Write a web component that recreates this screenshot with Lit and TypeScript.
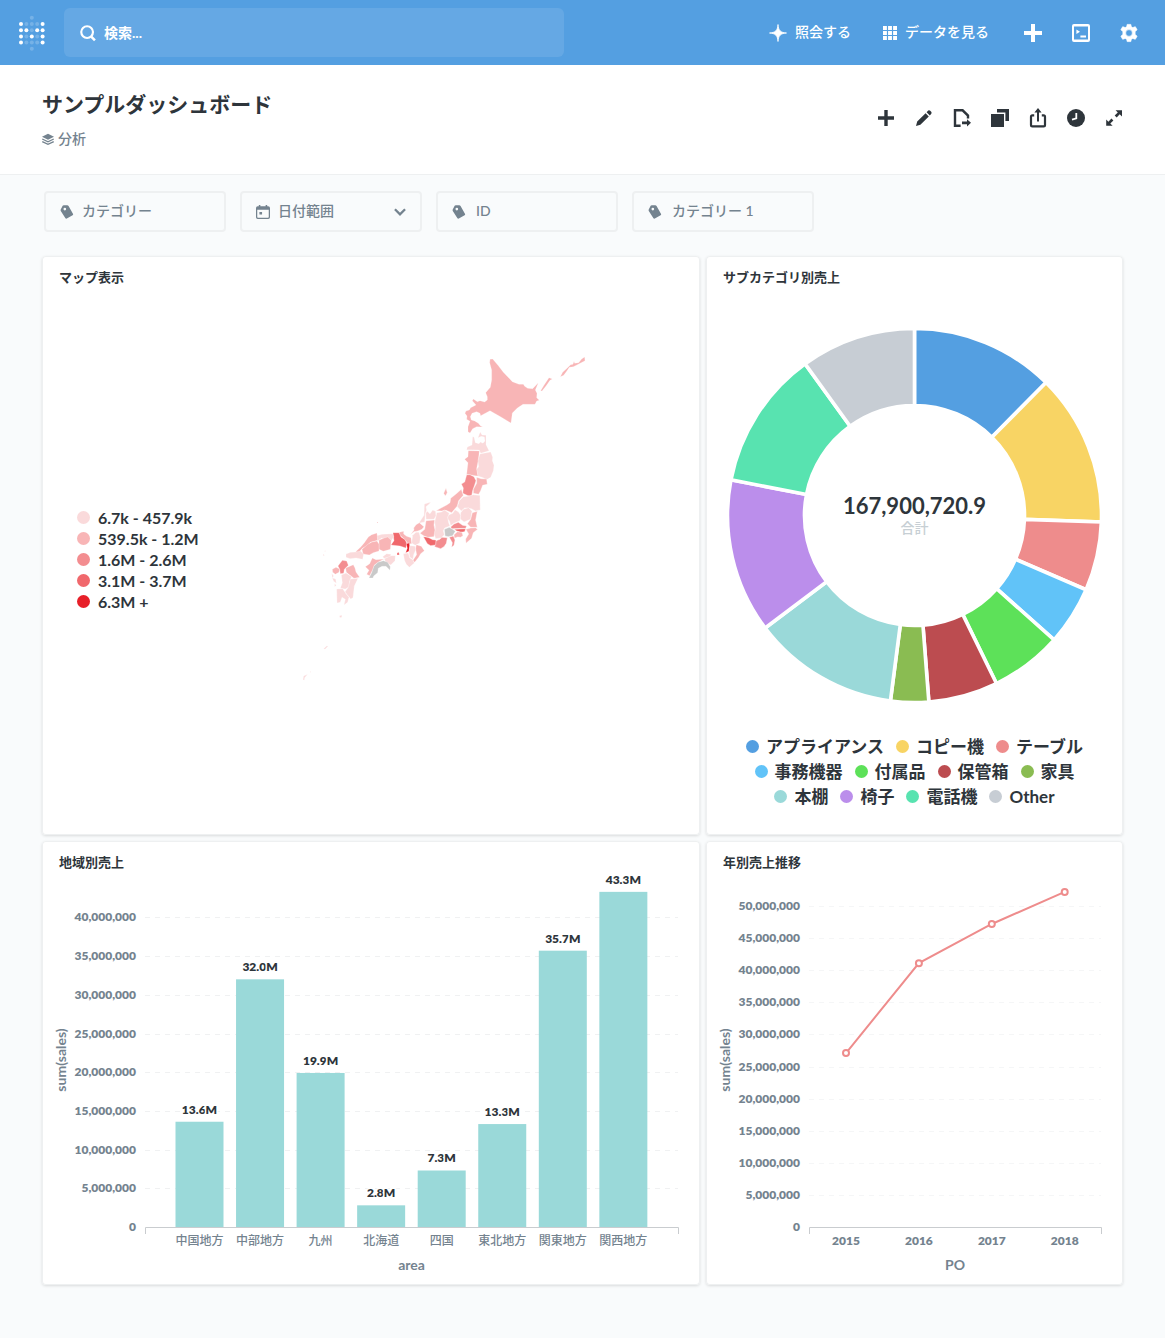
import { LitElement, html, svg, css, SVGTemplateResult } from "lit";
import { customElement, property } from "lit/decorators.js";

const baseType = css`
  :host {
    font-family: Lato, "Noto Sans CJK JP", sans-serif;
    color: #2e353b;
  }
  * {
    box-sizing: border-box;
  }
`;

/* ---------- Icons ---------- */

const ICONS: Record<string, SVGTemplateResult> = {
  search: svg`<circle cx="8" cy="8" r="6.6" fill="none" stroke="currentColor" stroke-width="2.4"/>
    <path d="M12.4 12.8 L16.8 17.4" stroke="currentColor" stroke-width="2.8"/>`,
  spark: svg`<path d="M9 0.5 C9.6 6.6 11.2 8.4 17.5 9 C11.2 9.6 9.6 11.4 9 17.5 C8.4 11.4 6.8 9.6 0.5 9 C6.8 8.4 8.4 6.6 9 0.5 Z" stroke="currentColor" stroke-width="0.8"/>`,
  grid: svg`<path d="M0 0h5v5H0z M6.5 0h5v5h-5z M13 0h5v5h-5z M0 6.5h5v5H0z M6.5 6.5h5v5h-5z M13 6.5h5v5h-5z M0 13h5v5H0z M6.5 13h5v5h-5z M13 13h5v5h-5z"/>`,
  plus: svg`<path d="M7 0h4v7h7v4h-7v7H7v-7H0V7h7z"/>`,
  add: svg`<path d="M7.3 1h3.4v6.3H17v3.4h-6.3V17H7.3v-6.3H1V7.3h6.3z"/>`,
  terminal: svg`<path fill-rule="evenodd" d="M2 0h14a2 2 0 0 1 2 2v14a2 2 0 0 1-2 2H2a2 2 0 0 1-2-2V2a2 2 0 0 1 2-2z M2 2.4v13.2h14V2.4z"/>
    <path d="M4.4 5.4 L8 7.7 L4.4 10z M8.4 11.6h5.6v1.8H8.4z"/>`,
  gear: svg`<path fill-rule="evenodd" stroke="currentColor" stroke-width="0.7" stroke-linejoin="round" d="M7.2 .4h3.6l.5 2.4 1.5.8 2.5-.9 1.8 3.1-2 1.7v3l2 1.7-1.8 3.1-2.5-.9-1.5.9-.5 2.3H7.2l-.5-2.3-1.5-.9-2.5.9L.9 12.2l2-1.7v-3l-2-1.7 1.8-3.1 2.5.9 1.5-.8z M9 5.6a3.4 3.4 0 1 0 0 6.8 3.4 3.4 0 0 0 0-6.8z"/>`,
  pencil: svg`<path d="M1 17 L2.2 12.6 L10.6 4.2 L13.8 7.4 L5.4 15.8 Z M11.6 3.2 L13.2 1.6 Q14.2 .8 15.2 1.8 L16.2 2.8 Q17 3.8 16.3 4.8 L14.8 6.4 Z"/>`,
  fileOut: svg`<path d="M7.6 16.7H2V1.3H9.6L15 6.6V9.4" fill="none" stroke="currentColor" stroke-width="2.4"/>
    <path d="M9 12.4h5V10.2l4 3.6-4 3.6v-2.2H9z"/>`,
  clone: svg`<path d="M0 5h13v13H0z M6 0h12v12h-3.6V3.6H6z"/>`,
  share: svg`<path d="M5.2 6.4H3.4Q2 6.4 2 7.8v8.1Q2 17.3 3.4 17.3h11.2q1.4 0 1.4-1.4V7.8q0-1.4-1.4-1.4h-1.8" fill="none" stroke="currentColor" stroke-width="2.2"/>
    <path d="M9 -1 L12.6 3.6H10V12.6H8V3.6H5.4z"/>`,
  clock: svg`<circle cx="9" cy="9" r="9"/><path d="M9.3 4v5.3L5 10.6" fill="none" stroke="#fff" stroke-width="1.8"/>`,
  expand: svg`<path d="M10.6 1.2H17V7.6L14.7 5.3L11.7 8.4L9.7 6.4L12.8 3.4z M1.2 10.4V16.8H7.6L5.3 14.6L8.4 11.6L6.4 9.6L3.4 12.7z"/>`,
  stack: svg`<path d="M9 1 L18 5.5 L9 10 L0 5.5z"/><path d="M.4 9 L9 13.2 L17.6 9 M.4 12.8 L9 17 L17.6 12.8" fill="none" stroke="currentColor" stroke-width="2"/>`,
  tag: svg`<path fill-rule="evenodd" d="M3.4 1 Q3.8 .2 4.8 .2 L9.4 .2 Q10.4 .3 11 1.2 L16.8 11.6 Q17.2 12.6 16.2 13.2 L8.8 17.4 Q7.6 17.9 7 17 L1 7.6 Q.6 6.8 .8 6z M6.2 3.6a1.7 1.7 0 1 0 0 3.4 1.7 1.7 0 0 0 0-3.4z"/>`,
  calendar: svg`<path fill-rule="evenodd" d="M3.6 0h2v1.6h6.8V0h2v1.6h1.2Q18 1.6 18 3.8V15.8Q18 18 15.8 18H2.2Q0 18 0 15.8V3.8Q0 1.6 2.2 1.6H3.6z M1.6 6v9.4Q1.6 16.4 2.6 16.4h12.8q1 0 1-1V6z M4.4 9h3.4v3.2H4.4z"/>`,
  chevron: svg`<path d="M2.5 5.5 L9 12 L15.5 5.5" fill="none" stroke="currentColor" stroke-width="3"/>`,
};

@customElement("ui-icon")
class UiIcon extends LitElement {
  @property() name = "";

  static styles = css`
    :host {
      display: inline-flex;
      width: 18px;
      height: 18px;
      flex: none;
    }
    svg {
      width: 100%;
      height: 100%;
      overflow: visible;
      fill: currentColor;
    }
  `;

  render() {
    return html`<svg viewBox="0 0 18 18" aria-hidden="true">${ICONS[this.name]}</svg>`;
  }
}

/* ---------- Top bar ---------- */

const LOGO_ROWS = ["..f..", "bfffb", "bbfbb", "bfbfb", "bfffb", "..f.."];

@customElement("top-bar")
class TopBar extends LitElement {
  static styles = [
    baseType,
    css`
      :host {
        display: block;
      }
      .bar {
        display: flex;
        align-items: center;
        height: 65px;
        padding: 0 27px 0 18px;
        background: #549fe1;
        color: #fff;
      }
      .logo {
        display: flex;
        width: 28px;
        margin-right: 18px;
      }
      .faint {
        opacity: 0.2;
      }
      .search {
        display: flex;
        align-items: center;
        gap: 8px;
        flex: 0 1 500px;
        height: 49px;
        padding: 0 16px;
        border-radius: 6px;
        background: rgba(255, 255, 255, 0.1);
      }
      .search ui-icon {
        width: 16px;
        height: 16px;
      }
      input {
        flex: 1;
        min-width: 0;
        border: 0;
        padding: 0;
        background: none;
        outline: none;
        font: 700 14px/20px Lato, "Noto Sans CJK JP", sans-serif;
        color: #fff;
      }
      input::placeholder {
        color: #fff;
        opacity: 1;
      }
      nav {
        display: flex;
        align-items: center;
        gap: 32px;
        margin-left: auto;
      }
      .link {
        display: flex;
        align-items: center;
        gap: 8px;
        color: #fff;
        text-decoration: none;
        font-size: 14px;
        font-weight: 500;
        line-height: 20px;
        white-space: nowrap;
      }
      .link span {
        padding-bottom: 2px;
      }
      .small {
        width: 14px;
        height: 14px;
      }
      button {
        display: flex;
        padding: 0;
        border: 0;
        background: none;
        color: inherit;
      }
      .tools {
        display: flex;
        gap: 30px;
        margin-left: 3px;
      }
    `,
  ];

  render() {
    return html`
      <header class="bar">
        <a class="logo" href="#" aria-label="ホーム">
          <svg width="28" height="36" viewBox="0 0 28 36" fill="#fff" aria-hidden="true">
            ${LOGO_ROWS.map((row, r) =>
              [...row].map((dot, c) =>
                dot === "."
                  ? null
                  : svg`<circle class=${dot === "f" ? "faint" : "lit"} cx=${3 + c * 5.4} cy=${2.8 + r * 6.2} r="2"/>`
              )
            )}
          </svg>
        </a>
        <label class="search">
          <ui-icon name="search"></ui-icon>
          <input type="text" placeholder="検索..." aria-label="検索" />
        </label>
        <nav>
          <a class="link" href="#"><ui-icon name="spark"></ui-icon><span>照会する</span></a>
          <a class="link" href="#"><ui-icon class="small" name="grid"></ui-icon><span>データを見る</span></a>
          <div class="tools">
            <button aria-label="作成"><ui-icon name="plus"></ui-icon></button>
            <button aria-label="SQL"><ui-icon name="terminal"></ui-icon></button>
            <button aria-label="設定"><ui-icon name="gear"></ui-icon></button>
          </div>
        </nav>
      </header>
    `;
  }
}

/* ---------- Card shell ---------- */

@customElement("dash-card")
class DashCard extends LitElement {
  @property() heading = "";

  static styles = [
    baseType,
    css`
      :host {
        display: block;
        min-width: 0;
        background: #fff;
        border-radius: 4px;
        box-shadow: inset 0 0 0 1px #eef0f1, 0 1px 3px rgba(0, 0, 0, 0.13);
      }
      h2 {
        height: 30px;
        margin: 0;
        padding: 11px 17px 0;
        font-size: 13px;
        line-height: 20px;
        font-weight: 700;
      }
    `,
  ];

  render() {
    return html`<h2>${this.heading}</h2><slot></slot>`;
  }
}

/* ---------- Map ---------- */

const SHADES = ["#fadadb", "#f8b5b6", "#f38d90", "#f0686c", "#e71f28"];
const MAP_LEGEND = ["6.7k - 457.9k", "539.5k - 1.2M", "1.6M - 2.6M", "3.1M - 3.7M", "6.3M +"];
const NO_DATA = "#c9c9c9";

type Region = [shade: number, outline: string];

const NORTH: Region[] = [
  [1, "M150 58L158 57L174 76L190 97L203 110L217 125L237 133L250 133L254 139L263 145L278 146L295 128L286 150L291 160L290 173L298 181L290 183L285 193L249 193L232 204L217 219L213 249L183 231L150 212L122 227L120 220L110 215L96 220L91 230L94 240L104 243L115 250L122 258L128 261L110 260L98 266L90 279L84 275L84 260L90 244L80 238L81 228L75 220L78 213L88 210L92 203L108 195L97 182L100 177L112 185L120 182L134 186L142 180L142 170L137 158L151 142L155 120L155 90L149 68z"],
  [1, "M302 152L312 136L327 113L337 117L330 121L318 138L306 153z"],
  [1, "M361 110L368 97L382 84L392 74L399 73L402 64L404 70L416 68L425 57L434 51L435 62L412 74L400 80L388 82L380 94L371 106z"],
  [0, "M98 290L102 291L106 308L117 311L121 306L129 310L135 303L133 291L124 289L114 293L118 283L121 276L126 285L138 286L138 314L147 332L122 340L118 330L80 329L82 321L96 315z"],
  [1, "M85 332L118 333L115 360L110 385L114 408L106 407L80 403L84 368L74 358L84 350z"],
  [0, "M120 342L152 336L158 352L157 362L162 376L160 392L152 412L138 420L130 413L114 408L110 388L116 380L114 362z"],
];

const CENTRAL: Region[] = [
  [2, "M200 134L210 134L222 140L228 152L224 165L218 182L215 198L204 197L188 190L190 174L184 162L194 156z"],
  [1, "M230 142L244 146L260 147L262 163L248 166L242 182L236 193L220 190L220 178L230 160z"],
  [0, "M190 200L208 198L220 194L236 196L240 196L241 240L226 243L214 236L194 234L184 243L172 230L178 212z"],
  [1, "M184 178L190 196L176 212L172 228L155 248L138 241L125 243L108 242L140 225L150 218L152 205L168 192z"],
  [1, "M138 174L142 188L136 198L131 190z"],
  [0, "M182 248L190 238L206 233L216 244L212 268L192 276L180 266z"],
  [1, "M217 248L232 244L227 270L232 292L212 292L202 281L212 268z"],
  [0, "M143 256L158 250L165 239L176 246L182 256L180 272L162 280L152 287L148 272L141 266z"],
  [2, "M152 291L162 282L175 277L188 286L200 288L197 295L155 296z"],
  [3, "M163 298L197 296L194 305L182 307L170 303z"],
  [1, "M198 298L212 294L226 293L233 298L220 308L215 325L198 340L197 327L206 312L202 305z"],
  [1, "M162 314L172 305L186 307L189 317L182 322L173 321L163 325z"],
  [2, "M148 322L160 318L165 330L162 346L155 352L157 338z"],
  [-1, "M133 298L148 292L158 298L166 304L158 317L145 320L135 318z"],
  [0, "M110 248L124 246L134 240L148 250L143 262L146 278L150 288L134 294L130 302L133 314L124 324L107 326L102 312L106 292L104 276z"],
  [2, "M108 332L120 328L126 322L142 323L139 340L132 350L122 356L104 350z"],
  [3, "M70 320L84 322L98 329L108 330L107 345L92 347L82 341z"],
  [1, "M78 272L104 270L102 285L105 300L102 320L84 322L72 318L60 310L74 298z"],
  [0, "M77 248L82 244L90 251L98 240L107 244L108 258L102 268L78 268z"],
  [0, "M73 222L93 216L88 222L78 230L80 240L76 252L74 276L56 280L72 256z"],
  [1, "M41 294L48 284L58 278L72 290L66 298L54 303L42 305L31 314L42 300z"],
];

const WEST: Region[] = [
  [0, "M368 76L378 67L387 67L391 82L389 99L376 106L365 99z"],
  [1, "M379 104L394 109L403 122L392 131L386 142L374 157L369 151L380 134L377 116z"],
  [1, "M330 76L328 67L341 64L341 72L350 79L363 83L365 101L354 101L346 90z"],
  [3, "M309 68L327 68L333 81L345 89L350 99L348 114L330 108L303 105L312 92z"],
  [4, "M349 101L358 99L359 108L357 124L347 128L352 115z"],
  [0, "M360 107L376 109L377 120L371 134L369 148L359 141L357 126z"],
  [0, "M340 131L355 129L359 143L369 150L373 159L358 172L349 163L344 152z"],
  [3, "M321 129L327 127L328 135L321 135z"],
  [0, "M261 77L276 73L308 71L311 80L305 91L290 85L274 85L264 93z"],
  [1, "M197 125L213 110L223 98L235 81L245 74L261 69L263 91L241 97L231 107L217 115L206 128z"],
  [1, "M267 91L280 85L293 81L304 91L301 118L280 124L267 118z"],
  [1, "M216 118L233 103L246 96L261 93L267 102L267 123L250 128L238 135L219 132z"],
  [0, "M168 132L182 127L198 126L211 123L221 132L218 148L198 144L180 146L168 142z"],
  [0, "M278 140L290 131L303 133L301 141L282 145z"],
  [0, "M283 146L304 137L316 137L315 152L302 165L287 157z"],
  [1, "M226 170L239 161L247 144L258 149L282 147L267 155L253 165L249 178L239 197L230 193L237 181z"],
  [-1, "M237 204L245 188L252 168L264 157L280 152L293 157L301 170L300 181L288 169L276 169L265 175L263 188L251 198L249 204z"],
  [2, "M144 168L157 151L170 153L175 166L163 178L161 190L151 191L149 178z"],
  [1, "M127 178L138 172L149 177L147 187L136 193L128 187z"],
  [1, "M167 174L190 164L195 174L198 186L209 202L192 205L182 197L169 187z"],
  [0, "M154 195L168 189L185 200L179 214L177 231L166 237L151 235L157 218z"],
  [0, "M181 207L204 205L193 228L189 263L182 267L165 246L175 232z"],
  [0, "M140 237L158 236L168 251L177 262L173 277L162 285L166 268L156 262L151 277L141 279z"],
  [0, "M125 190L131 198L127 204z M127 204L137 207L139 220L131 214z M134 221L139 226L134 230z"],
  [0, "M105 121L107 124L104 125z M99 132L104 136L99 137z M148 317L156 316L155 322L150 323z"],
  [0, "M101 416L111 407L114 409L105 418z M39 509L41 498L53 493L44 503L43 511z M60 487L63 483L63 487z"],
  [1, "M261 36h3v3h-3z"],
];

const drawRegions = (regions: Region[]) =>
  regions.map(([shade, d]) => svg`<path fill=${shade < 0 ? NO_DATA : SHADES[shade]} d=${d}/>`);

@customElement("japan-map")
class JapanMap extends LitElement {
  static styles = [
    baseType,
    css`
      :host {
        display: grid;
        grid-template-columns: 213px minmax(0, 1fr);
        padding: 0 10px 0 35px;
      }
      ul {
        list-style: none;
        margin: 0;
        padding: 221px 0 0;
        font-size: 16px;
        font-weight: 700;
        line-height: 21px;
      }
      li {
        display: flex;
        align-items: center;
        gap: 8px;
      }
      .dot {
        width: 13px;
        height: 13px;
      }
      .map {
        width: 100%;
        display: block;
      }
    `,
  ];

  render() {
    return html`
      <ul>
        ${MAP_LEGEND.map(
          (label, i) => html`<li>
            <svg class="dot" viewBox="0 0 13 13" aria-hidden="true"><circle cx="6.5" cy="6.5" r="6.5" fill=${SHADES[i]} /></svg>
            ${label}
          </li>`
        )}
      </ul>
      <svg class="map" viewBox="290 286 400 549" role="img" aria-label="マップ表示">
        <g stroke="#fff" stroke-linejoin="round">
          <g transform="translate(440 340) scale(0.3333)" stroke-width="0.6">${drawRegions(NORTH)}</g>
          <g transform="translate(400 430) scale(0.3333)" stroke-width="1.2">${drawRegions(CENTRAL)}</g>
          <g transform="translate(290 510) scale(0.3333)" stroke-width="0.8">${drawRegions(WEST)}</g>
        </g>
      </svg>
    `;
  }
}

/* ---------- Donut ---------- */

const SLICES: { label: string; color: string; end: number }[] = [
  { label: "アプライアンス", color: "#549fe1", end: 44.7 },
  { label: "コピー機", color: "#f8d464", end: 92 },
  { label: "テーブル", color: "#ee8c8c", end: 113.4 },
  { label: "事務機器", color: "#61c3f8", end: 131.7 },
  { label: "付属品", color: "#5de159", end: 154 },
  { label: "保管箱", color: "#bc4c50", end: 175.6 },
  { label: "家具", color: "#8abc52", end: 187.4 },
  { label: "本棚", color: "#9ad9d9", end: 233 },
  { label: "椅子", color: "#bb8eeb", end: 281 },
  { label: "電話機", color: "#58e3b0", end: 324.2 },
  { label: "Other", color: "#c7cdd4", end: 360 },
];

const polar = (radius: number, deg: number) => {
  const a = ((deg - 90) * Math.PI) / 180;
  return `${(radius * Math.cos(a)).toFixed(2)} ${(radius * Math.sin(a)).toFixed(2)}`;
};

const arcPath = (from: number, to: number, inner: number, outer: number) =>
  `M${polar(outer, from)}A${outer} ${outer} 0 0 1 ${polar(outer, to)}L${polar(inner, to)}A${inner} ${inner} 0 0 0 ${polar(inner, from)}z`;

@customElement("donut-chart")
class DonutChart extends LitElement {
  static styles = [
    baseType,
    css`
      :host {
        display: block;
      }
      .chart {
        display: block;
        width: 100%;
      }
      .total {
        font-size: 22px;
        font-weight: 700;
        fill: #2e353b;
      }
      .caption {
        font-size: 14px;
        font-weight: 500;
        fill: #c7cfd4;
      }
      ul {
        list-style: none;
        display: flex;
        flex-wrap: wrap;
        justify-content: center;
        column-gap: 12px;
        margin: 0;
        padding: 0 24px 24px;
        font-size: 17px;
        font-weight: 700;
        line-height: 25px;
      }
      li {
        display: flex;
        align-items: center;
        gap: 7px;
      }
      .dot {
        width: 13px;
        height: 13px;
      }
    `,
  ];

  render() {
    return html`
      <svg class="chart" viewBox="0 0 417 448" role="img" aria-label="サブカテゴリ別売上">
        <g transform="translate(208.5 229.5)">
          ${SLICES.map(
            (s, i) =>
              svg`<path fill=${s.color} stroke="#fff" stroke-width="3.6" d=${arcPath(i ? SLICES[i - 1].end : 0, s.end, 110, 187)}/>`
          )}
          <text class="total" text-anchor="middle" y="-2">167,900,720.9</text>
          <text class="caption" text-anchor="middle" y="17">合計</text>
        </g>
      </svg>
      <ul>
        ${SLICES.map(
          (s) => html`<li>
            <svg class="dot" viewBox="0 0 13 13" aria-hidden="true"><circle cx="6.5" cy="6.5" r="6.5" fill=${s.color} /></svg>
            ${s.label}
          </li>`
        )}
      </ul>
    `;
  }
}

/* ---------- Cartesian charts ---------- */

const PLOT_LEFT = 103;
const BASELINE = 356;
const CHART_HEIGHT = 414;

const chartType = css`
  :host {
    display: block;
  }
  svg {
    display: block;
    width: 100%;
  }
  .tick {
    font-size: 12px;
    font-weight: 800;
    fill: #74838f;
  }
  .name {
    font-weight: 500;
  }
  .axis-title {
    font-size: 14px;
    font-weight: 700;
    fill: #74838f;
  }
  .value {
    font-size: 12px;
    font-weight: 800;
    fill: #2e353b;
    stroke: #fff;
    stroke-width: 3;
    paint-order: stroke;
  }
  .gridline {
    stroke: #f0f1f2;
    stroke-dasharray: 5 5;
  }
  .axis {
    fill: none;
    stroke: #c9cccf;
  }
  .bar {
    fill: #9ad9d9;
  }
  .series {
    fill: none;
    stroke: #ee8c8c;
    stroke-width: 2;
  }
  .point {
    fill: #fff;
    stroke: #ee8c8c;
    stroke-width: 2;
  }
`;

const frame = (right: number, maxTick: number, perMillion: number, xTitle: string) => {
  const ticks = Array.from({ length: maxTick / 5 + 1 }, (_, i) => i * 5);
  return svg`
    ${ticks.map((t) => {
      const y = Math.round(BASELINE - t * perMillion);
      return svg`
        ${t ? svg`<line class="gridline" x1=${PLOT_LEFT} x2=${right} y1=${y + 0.5} y2=${y + 0.5}/>` : null}
        <text class="tick" text-anchor="end" x="94" y=${y + 4}>${(t * 1e6).toLocaleString("en-US")}</text>`;
    })}
    <text class="axis-title" text-anchor="middle" transform="translate(24 189) rotate(-90)">sum(sales)</text>
    <text class="axis-title" text-anchor="middle" x=${(PLOT_LEFT + right) / 2} y="399">${xTitle}</text>`;
};

const axisLine = (right: number) =>
  svg`<path class="axis" d=${`M${PLOT_LEFT + 0.5} ${BASELINE + 7}V${BASELINE + 0.5}H${right + 0.5}V${BASELINE + 7}`}/>`;

const AREAS: [string, number][] = [
  ["中国地方", 13.6],
  ["中部地方", 32.0],
  ["九州", 19.9],
  ["北海道", 2.8],
  ["四国", 7.3],
  ["東北地方", 13.3],
  ["関東地方", 35.7],
  ["関西地方", 43.3],
];

@customElement("area-bars")
class AreaBars extends LitElement {
  static styles = [baseType, chartType];

  render() {
    const perMillion = 7.74;
    return html`
      <svg viewBox="0 0 658 ${CHART_HEIGHT}" role="img" aria-label="地域別売上">
        ${frame(636, 40, perMillion, "area")}
        ${AREAS.map(([name, sales], i) => {
          const center = 157.5 + i * 60.55;
          const height = sales * perMillion;
          const top = BASELINE - height;
          return svg`
            <rect class="bar" x=${center - 24} y=${top} width="48" height=${height}/>
            <text class="value" text-anchor="middle" x=${center} y=${top - 8}>${sales.toFixed(1)}M</text>
            <text class="tick name" text-anchor="middle" x=${center} y="374">${name}</text>`;
        })}
        ${axisLine(636)}
      </svg>
    `;
  }
}

const YEARS: [string, number][] = [
  ["2015", 27.1],
  ["2016", 41.1],
  ["2017", 47.2],
  ["2018", 52.2],
];

@customElement("year-line")
class YearLine extends LitElement {
  static styles = [
    baseType,
    chartType,
    css`
      .gridline {
        stroke: #f5f6f7;
      }
    `,
  ];

  render() {
    const perMillion = 6.42;
    const points = YEARS.map(([year, sales], i) => ({
      year,
      x: 140 + i * 72.9,
      y: BASELINE - sales * perMillion,
    }));
    return html`
      <svg viewBox="0 0 417 ${CHART_HEIGHT}" role="img" aria-label="年別売上推移">
        ${frame(395, 50, perMillion, "PO")} ${axisLine(395)}
        <polyline class="series" points=${points.map((p) => `${p.x},${p.y}`).join(" ")} />
        ${points.map(
          (p) => svg`
            <circle class="point" cx=${p.x} cy=${p.y} r="3"/>
            <text class="tick" text-anchor="middle" x=${p.x} y="374">${p.year}</text>`
        )}
      </svg>
    `;
  }
}

/* ---------- Page ---------- */

const ACTIONS: [string, string][] = [
  ["add", "質問を追加"],
  ["pencil", "編集"],
  ["fileOut", "移動"],
  ["clone", "複製"],
  ["share", "共有"],
  ["clock", "自動更新"],
  ["expand", "全画面"],
];

@customElement("app-root")
class AppRoot extends LitElement {
  static styles = [
    baseType,
    css`
      :host {
        display: block;
        min-height: 100vh;
        background: #f9fbfc;
      }
      .title-bar {
        display: flex;
        align-items: center;
        justify-content: space-between;
        padding: 23px 42px 25px;
        background: #fff;
        border-bottom: 1px solid #eef0f1;
      }
      h1 {
        margin: 0;
        font-size: 21px;
        line-height: 31px;
        font-weight: 700;
      }
      .collection {
        display: flex;
        align-items: center;
        gap: 4px;
        margin-top: 10px;
        font-size: 14px;
        line-height: 20px;
        font-weight: 500;
        color: #74838f;
        text-decoration: none;
      }
      .collection ui-icon {
        width: 12px;
        height: 12px;
      }
      .actions {
        display: flex;
        gap: 20px;
        padding-bottom: 2px;
      }
      .actions button {
        display: flex;
        padding: 0;
        border: 0;
        background: none;
        color: #2e353b;
      }
      .filters {
        display: flex;
        flex-wrap: wrap;
        gap: 14px;
        padding: 16px 44px 24px;
      }
      .filter {
        display: flex;
        align-items: center;
        gap: 8px;
        width: 182px;
        height: 41px;
        padding: 0 13px 0 14px;
        border: 2px solid #eef0f1;
        border-radius: 4px;
        color: #74838f;
      }
      .filter.roomy {
        gap: 10px;
      }
      .filter ui-icon {
        width: 14px;
        height: 14px;
      }
      .filter input,
      .filter select {
        flex: 1;
        min-width: 0;
        width: 0;
        border: 0;
        padding: 0 0 1px;
        appearance: none;
        background: none;
        outline: none;
        font: 500 14px/20px Lato, "Noto Sans CJK JP", sans-serif;
        color: #74838f;
      }
      .filter input::placeholder {
        color: #74838f;
        opacity: 1;
      }
      .cards {
        display: grid;
        grid-template-columns: minmax(0, 658fr) minmax(0, 417fr);
        gap: 6px;
        padding: 0 42px 53px;
      }
    `,
  ];

  private textFilter(label: string, layout = "") {
    return html`<label class="filter ${layout}">
      <ui-icon name="tag"></ui-icon>
      <input type="text" placeholder=${label} aria-label=${label} />
    </label>`;
  }

  render() {
    return html`
      <top-bar></top-bar>
      <main>
        <section class="title-bar">
          <div>
            <h1>サンプルダッシュボード</h1>
            <a class="collection" href="#"><ui-icon name="stack"></ui-icon>分析</a>
          </div>
          <div class="actions">
            ${ACTIONS.map(([icon, label]) => html`<button aria-label=${label}><ui-icon name=${icon}></ui-icon></button>`)}
          </div>
        </section>
        <section class="filters">
          ${this.textFilter("カテゴリー")}
          <label class="filter">
            <ui-icon name="calendar"></ui-icon>
            <select aria-label="日付範囲">
              <option>日付範囲</option>
            </select>
            <ui-icon name="chevron"></ui-icon>
          </label>
          ${this.textFilter("ID", "roomy")} ${this.textFilter("カテゴリー 1", "roomy")}
        </section>
        <section class="cards">
          <dash-card heading="マップ表示"><japan-map></japan-map></dash-card>
          <dash-card heading="サブカテゴリ別売上"><donut-chart></donut-chart></dash-card>
          <dash-card heading="地域別売上"><area-bars></area-bars></dash-card>
          <dash-card heading="年別売上推移"><year-line></year-line></dash-card>
        </section>
      </main>
    `;
  }
}
